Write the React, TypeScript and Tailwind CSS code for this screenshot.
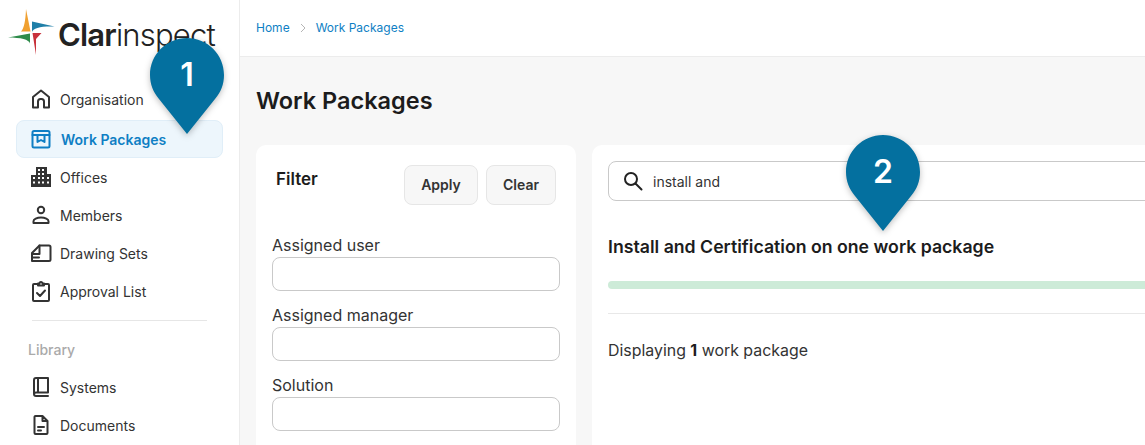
import type {ReactNode} from 'react';

const stroke = {
  fill: 'none',
  stroke: 'currentColor',
  strokeWidth: 2,
  strokeLinecap: 'round' as const,
  strokeLinejoin: 'round' as const,
};

const Icon = ({children}: {children: ReactNode}) => (
  <svg width="22" height="22" viewBox="0 0 22 22" className="shrink-0">
    {children}
  </svg>
);

const HomeIcon = () => (
  <Icon>
    <path {...stroke} d="M3 19.500V9L11 2.500 19 9v10.500h-5v-6a2.500 2.500 0 0 0-2.500-2.500h-1A2.500 2.500 0 0 0 8 13.500v6z" />
  </Icon>
);

const PackageIcon = () => (
  <Icon>
    <rect {...stroke} x="2.500" y="3" width="17" height="16.500" rx="1.500" />
    <path {...stroke} d="M2.500 7h17M7.500 7v7l3.500-2 3.500 2V7" />
  </Icon>
);

const OfficesIcon = () => (
  <Icon>
    <path
      fill="currentColor"
      fillRule="evenodd"
      d="M6 1h11v7h4v13H1V9h5zM8 3v2h2V3zm4 0v2h2V3zM8 7v2h2V7zm4 0v2h2V7zM3 11v2h2v-2zm5 0v2h2v-2zm4 0v2h2v-2zm5 0v2h2v-2zM3 15.500v2h2v-2zm5 0v2h2v-2zm4 0v2h2v-2zm5 0v2h2v-2z"
    />
  </Icon>
);

const MemberIcon = () => (
  <Icon>
    <circle {...stroke} cx="11" cy="6" r="3.200" />
    <path {...stroke} d="M3.500 19v-1.800c0-1.800 3.400-3.700 7.500-3.700s7.500 1.900 7.500 3.700V19z" />
  </Icon>
);

const DrawingIcon = () => (
  <Icon>
    <path {...stroke} d="M9.500 3.500H19a1.500 1.500 0 0 1 1.500 1.500v12.500A1.500 1.500 0 0 1 19 19H2V11z" />
    <path {...stroke} d="M9.500 3.500V12H2M2 15.500h7" />
  </Icon>
);

const ApprovalIcon = () => (
  <Icon>
    <path {...stroke} d="M8 4H4a1 1 0 0 0-1 1v15a1 1 0 0 0 1 1h14a1 1 0 0 0 1-1V5a1 1 0 0 0-1-1h-4" />
    <path {...stroke} d="M8 5.500v-2h1.500a1.500 1.500 0 0 1 3 0H14v2zM7 13l3 3 5-5.500" />
  </Icon>
);

const BookIcon = () => (
  <Icon>
    <path {...stroke} d="M4 17.500V4a2 2 0 0 1 2-2h12v14.500H6a2 2 0 0 0-2 1.500 2 2 0 0 0 2 2h12M8 2v14" />
  </Icon>
);

const DocumentIcon = () => (
  <Icon>
    <path {...stroke} d="M12.500 2H5.500a1 1 0 0 0-1 1v16a1 1 0 0 0 1 1h11a1 1 0 0 0 1-1V7zM12.500 2v5h5" />
    <path {...stroke} d="M8 13h6M8 16.500h3" />
  </Icon>
);

const Logo = () => (
  <div className="flex h-[56px] items-center">
    <svg width="58" height="56" viewBox="0 0 58 56" className="shrink-0">
      <path fill="#f0a030" d="M26 3l4.500 22.500H21c3-3 4.500-10 5-22.500z" />
      <path fill="#1f7fa8" d="M54.500 20.500L32 15.500v10.500c1-4 9-6 22.500-5.500z" />
      <path fill="#2e8b4a" d="M8 31.500l22-4v10c-1-4-9-6-22-6z" />
      <path fill="#c8323c" d="M36 49l-3.500-22h9l-5.500 6z" />
    </svg>
    <span className="font-['Inter',sans-serif] text-[31px] leading-none tracking-[-0.8px] text-[#222]">
      <span className="font-semibold">Clar</span>
      <span className="font-light">inspect</span>
    </span>
  </div>
);

const NavItem = ({icon, label}: {icon: ReactNode; label: string}) => (
  <div className="flex h-[38px] items-center gap-[8px] pl-[30px] text-[14px] text-[#333]">
    {icon}
    <span>{label}</span>
  </div>
);

const Field = ({label}: {label: string}) => (
  <div className="mb-[14px]">
    <div className="h-[22px] text-[16px] leading-[20px] text-[#333]">{label}</div>
    <div className="h-[34px] rounded-[8px] border border-[#c9c9c9] bg-white" />
  </div>
);

const Pin = ({label, className}: {label: string; className: string}) => (
  <div className={`absolute h-[98px] w-[76px] ${className}`}>
    <svg width="76" height="98" viewBox="0 0 76 98" className="drop-shadow-[0_2px_3px_rgba(0,0,0,0.25)]">
      <path fill="#04709f" d="M38 1C17.500 1 1 17.500 1 38c0 9 3 17 9 24l28 35 28-35c6-7 9-15 9-24C75 17.500 58.500 1 38 1z" />
    </svg>
    <span className="absolute top-[14px] left-0 w-full text-center text-[32px] leading-[48px] font-semibold text-white">
      {label}
    </span>
  </div>
);

export default function App() {
  return (
    <div className="relative flex h-[445px] w-[1145px] overflow-hidden bg-[#f7f7f7] font-['Inter',sans-serif]">
      <aside className="w-[240px] shrink-0 border-r border-[#ececec] bg-white">
        <div className="mt-[6px]">
          <Logo />
        </div>
        <nav className="mt-[18px]">
          <NavItem icon={<HomeIcon />} label="Organisation" />
          <div className="mx-[16px] mt-[2px] flex h-[38px] w-[207px] items-center gap-[9px] rounded-[8px] border border-[#e0eef8] bg-[#edf6fc] pl-[13px] text-[14px] font-semibold text-[#0f7fc4]">
            <PackageIcon />
            <span>Work Packages</span>
          </div>
          <NavItem icon={<OfficesIcon />} label="Offices" />
          <NavItem icon={<MemberIcon />} label="Members" />
          <NavItem icon={<DrawingIcon />} label="Drawing Sets" />
          <NavItem icon={<ApprovalIcon />} label="Approval List" />
          <div className="mx-[32px] mt-[10px] h-px w-[175px] bg-[#e6e6e6]" />
          <div className="mt-[19px] h-[20px] pl-[28px] text-[14px] leading-[20px] font-medium text-[#aaa]">Library</div>
          <div className="mt-[8px]">
            <NavItem icon={<BookIcon />} label="Systems" />
            <NavItem icon={<DocumentIcon />} label="Documents" />
          </div>
        </nav>
      </aside>

      <main className="min-w-0 flex-1">
        <header className="flex h-[57px] items-center gap-[9px] border-b border-[#ececec] bg-white pl-[16px] text-[12px] text-[#0f7fc4]">
          <span>Home</span>
          <svg width="8" height="10" viewBox="0 0 8 10">
            <path d="M2 1l4 4-4 4" fill="none" stroke="#b5b5b5" strokeWidth="1" />
          </svg>
          <span>Work Packages</span>
        </header>
        <h1 className="mt-[29px] h-[30px] pl-[16px] text-[23.500px] leading-[30px] font-semibold text-[#1c1c1c]">
          Work Packages
        </h1>
        <div className="mt-[29px] flex gap-[16px] pl-[16px]">
          <section className="h-[320px] w-[320px] shrink-0 rounded-t-[10px] bg-white px-[16px] pt-[20px]">
            <div className="flex h-[40px] items-start justify-between pr-[4px] pl-[4px]">
              <div className="pt-[1px] text-[17px] leading-[26px] font-semibold text-[#1c1c1c]">Filter</div>
              <div className="flex gap-[8px]">
                <button className="h-[40px] w-[74px] rounded-[8px] border border-[#e6e6e6] bg-[#f7f7f7] pb-[2px] text-[14px] font-semibold text-[#333]">
                  Apply
                </button>
                <button className="h-[40px] w-[70px] rounded-[8px] border border-[#e6e6e6] bg-[#f7f7f7] pb-[2px] text-[14px] font-semibold text-[#333]">
                  Clear
                </button>
              </div>
            </div>
            <div className="mt-[30px]">
              <Field label="Assigned user" />
              <Field label="Assigned manager" />
              <Field label="Solution" />
            </div>
          </section>
          <section className="h-[320px] w-[800px] shrink-0 rounded-t-[10px] bg-white px-[16px] pt-[16px]">
            <div className="flex h-[40px] items-center gap-[10px] rounded-[8px] border border-[#c9c9c9] pl-[14px] text-[14px] text-[#333]">
              <svg width="20" height="20" viewBox="0 0 20 20">
                <circle cx="8" cy="8" r="6" fill="none" stroke="#222" strokeWidth="2" />
                <path d="M12.500 12.500l6 6" stroke="#222" strokeWidth="2" strokeLinecap="round" />
              </svg>
              <span>install and</span>
            </div>
            <h2 className="mt-[34px] h-[24px] text-[17.700px] leading-[24px] font-semibold text-[#1c1c1c]">
              Install and Certification on one work package
            </h2>
            <div className="mt-[22px] h-[8px] rounded-full bg-[#cdebd8]" />
            <div className="mt-[24px] h-px bg-[#e8e8e8]" />
            <p className="mt-[26px] text-[15.900px] leading-[22px] text-[#333]">
              Displaying <span className="font-bold text-[#1c1c1c]">1</span> work package
            </p>
          </section>
        </div>
      </main>

      <Pin label="1" className="top-[37px] left-[149px]" />
      <Pin label="2" className="top-[134px] left-[845px]" />
    </div>
  );
}
